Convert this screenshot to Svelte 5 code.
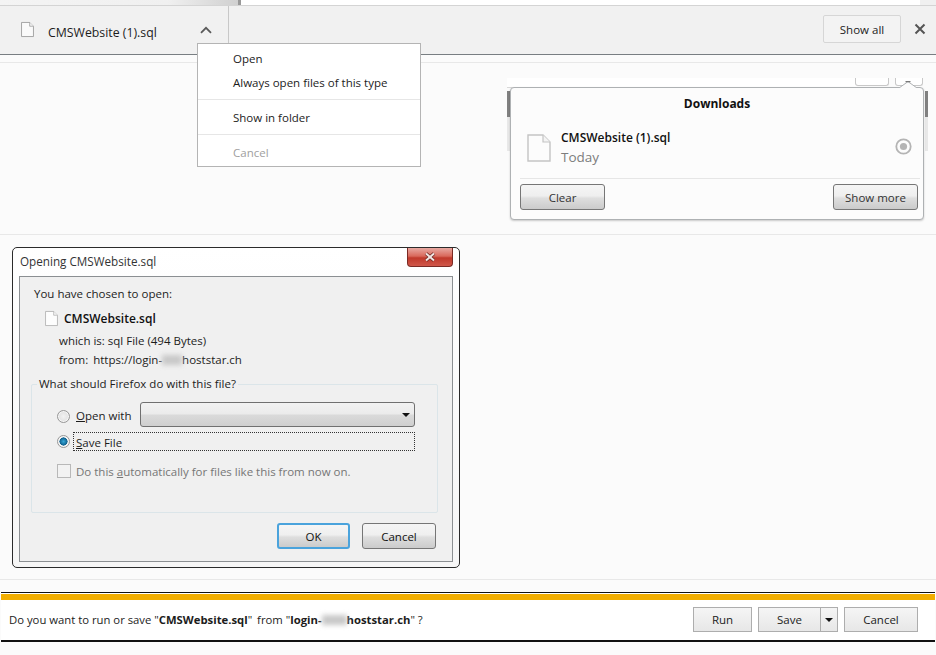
<script>
  const menu = [
    { label: 'Open' },
    { label: 'Always open files of this type', divider: true },
    { label: 'Show in folder', divider: true },
    { label: 'Cancel', disabled: true }
  ];
</script>

{#snippet doc(w, h, stroke, fill)}
  <svg width={w} height={h} viewBox="0 0 24 28" class="doc">
    <path d="M1 1H16L23 8V27H1Z" fill={fill} stroke={stroke} stroke-width="1.4" />
    <path d="M16 1V8H23" fill="#f4f4f4" stroke={stroke} stroke-width="1.2" />
  </svg>
{/snippet}

<div class="page">
  <div class="strip"><span class="strip-fade"></span><span class="strip-tick"></span><span class="strip-end"></span></div>

  <div class="bar">
    <div class="item">
      {@render doc(13, 17, '#8d8d8d', '#fafafa')}
      <span class="item-name">CMSWebsite (1).sql</span>
      <svg class="chevron" width="12" height="8" viewBox="0 0 12 8">
        <path d="M1 6.8L6 1.8L11 6.8" fill="none" stroke="#5a5a5a" stroke-width="1.8" />
      </svg>
    </div>
    <button class="show-all">Show all</button>
    <svg class="close" width="12" height="12" viewBox="0 0 12 12">
      <path d="M1.5 1.5L10.5 10.5M10.5 1.5L1.5 10.5" stroke="#555" stroke-width="2" />
    </svg>
  </div>

  <div class="menu">
    {#each menu as m}
      <div class="menu-row" class:disabled={m.disabled} class:divided={m.divider}>{m.label}</div>
    {/each}
  </div>

  <section class="band top">
    <div class="popup-wrap">
      <div class="behind"></div>
      <div class="behind-btn one"></div>
      <div class="behind-btn two"></div>
      <div class="side left"></div>
      <div class="side right"></div>
      <div class="popup">
        <svg class="caret" width="18" height="7" viewBox="0 0 18 7">
          <path d="M0 7L9 0.6L18 7" fill="#fcfcfc" stroke="#aeb1b3" stroke-width="1" />
          <path d="M6.5 0H11.5V1.2H6.5Z" fill="#777" />
        </svg>
        <div class="popup-title">Downloads</div>
        <div class="popup-row">
          {@render doc(24, 28, '#c4c4c4', '#fcfcfc')}
          <div class="popup-info">
            <div class="popup-name">CMSWebsite (1).sql</div>
            <div class="popup-date">Today</div>
          </div>
          <svg class="target" width="17" height="17" viewBox="0 0 17 17">
            <circle cx="8.5" cy="8.5" r="7.2" fill="none" stroke="#b4b4b4" stroke-width="1.8" />
            <circle cx="8.5" cy="8.5" r="3.6" fill="#b4b4b4" />
          </svg>
        </div>
        <div class="popup-actions">
          <button class="aero clear">Clear</button>
          <button class="aero more">Show more</button>
        </div>
      </div>
    </div>
  </section>

  <section class="band middle">
    <div class="dialog">
      <div class="titlebar">
        <span>Opening CMSWebsite.sql</span>
        <div class="win-close">
          <svg width="14" height="10" viewBox="0 0 14 10">
            <path d="M3 1.5L11 8.5M11 1.5L3 8.5" stroke="#6d2a24" stroke-width="3.6" />
            <path d="M3 1.5L11 8.5M11 1.5L3 8.5" stroke="#f2e6e4" stroke-width="2" />
          </svg>
        </div>
      </div>
      <div class="panel">
        <div class="chosen">You have chosen to open:</div>
        <div class="file-line">
          {@render doc(13, 17, '#a8a8a8', '#fdfdfd')}
          <strong>CMSWebsite.sql</strong>
        </div>
        <div class="meta">which is: sql File (494 Bytes)</div>
        <div class="meta from">from:<span class="url">https://login-<i class="smudge wide"></i>hoststar.ch</span></div>

        <div class="group">
          <div class="legend">What should Firefox do with this file?</div>
          <div class="option">
            <span class="radio low"></span>
            <span class="opt-label"><u>O</u>pen with</span>
            <div class="select"><span class="select-arrow"></span></div>
          </div>
          <div class="option save">
            <span class="radio on"></span>
            <span class="opt-focus"><u>S</u>ave File</span>
          </div>
          <div class="option auto">
            <span class="check"></span>
            <span>Do this <u>a</u>utomatically for files like this from now on.</span>
          </div>
        </div>

        <div class="dialog-actions">
          <button class="aero ok">OK</button>
          <button class="aero cancel">Cancel</button>
        </div>
      </div>
    </div>
  </section>

  <div class="notify">
    <p>Do you want to run or save "<b>CMSWebsite.sql</b>" <span class="from-word">from</span> "<b>login-<i class="smudge"></i>hoststar.ch</b>" ?</p>
    <div class="notify-actions">
      <button class="flat run">Run</button>
      <div class="split">
        <button class="flat save-btn">Save</button>
        <button class="flat drop" aria-label="More"><span class="drop-arrow"></span></button>
      </div>
      <button class="flat cancel-btn">Cancel</button>
    </div>
  </div>
</div>

<style>
  :global(body) {
    margin: 0;
    background: #fbfbfb;
  }

  .page {
    position: relative;
    width: 936px;
    height: 655px;
    overflow: hidden;
    font-family: "Open Sans", "Noto Sans", sans-serif;
    font-size: 11.5px;
    color: #1c1c1c;
  }

  button {
    font: inherit;
    color: inherit;
    padding: 0;
  }

  .doc {
    display: block;
    flex: none;
  }

  .strip {
    position: relative;
    height: 5px;
    background: #fff;
    border-bottom: 1px solid #d4d4d4;
  }

  .strip-fade {
    position: absolute;
    left: 0;
    top: 0;
    width: 240px;
    height: 5px;
    background: linear-gradient(90deg, #f4f4f4 0%, #f0f0f0 70%, #cfcfcf 100%);
  }

  .strip-tick {
    position: absolute;
    left: 238px;
    top: 0;
    width: 3px;
    height: 5px;
    background: #999;
  }

  .strip-end {
    position: absolute;
    right: 0;
    top: 0;
    width: 16px;
    height: 5px;
    background: #f0f0f0;
  }

  .bar {
    height: 48px;
    background: #f1f1f1;
    border-bottom: 1px solid #787e82;
    display: flex;
    align-items: flex-start;
  }

  .item {
    width: 229px;
    height: 48px;
    box-sizing: border-box;
    border-right: 1px solid #c8c8c8;
    margin-right: 594px;
    padding: 15px 0 0 21px;
    display: flex;
    align-items: flex-start;
  }

  .item-name {
    margin-left: 14px;
    margin-top: 3px;
    width: 152px;
    font-size: 12.3px;
  }

  .chevron {
    margin-top: 5px;
  }

  .show-all {
    width: 78px;
    height: 28px;
    margin-top: 9px;
    background: #f3f3f3;
    border: 1px solid #d6d6d6;
    border-radius: 2px;
  }

  .close {
    margin: 17px 0 0 13px;
  }

  .menu {
    position: absolute;
    left: 197px;
    top: 43px;
    width: 224px;
    box-sizing: border-box;
    height: 124px;
    background: #fff;
    border: 1px solid #b4b4b4;
    padding-top: 3px;
    z-index: 5;
  }

  .menu-row {
    height: 24px;
    line-height: 24px;
    padding-left: 35px;
  }

  .menu-row.divided {
    height: 29px;
    line-height: 24px;
    border-bottom: 1px solid #e6e6e6;
    box-sizing: border-box;
  }

  .menu-row.divided:nth-child(3) {
    height: 35px;
    padding-top: 6px;
  }

  .menu-row.disabled {
    margin-top: 6px;
    color: #a0a0a0;
  }

  .band {
    border-top: 1px solid #e8e8e8;
    border-bottom: 1px solid #e8e8e8;
    box-sizing: border-box;
  }

  .band.top {
    margin-top: 7px;
    height: 173px;
    display: flex;
    justify-content: flex-end;
    padding: 24px 12px 0 0;
  }

  .popup-wrap {
    position: relative;
    width: 414px;
  }

  .behind {
    position: absolute;
    left: -3px;
    top: -9px;
    width: 350px;
    height: 9px;
    background: #fff;
    border-bottom: 1px solid #d8d8d8;
  }

  .behind-btn {
    position: absolute;
    top: -9px;
    height: 7px;
    border: 1px solid #c8c8c8;
    border-top: 0;
    border-radius: 0 0 3px 3px;
    background: #fff;
  }

  .behind-btn.one {
    left: 345px;
    width: 32px;
  }

  .behind-btn.two {
    left: 385px;
    width: 26px;
  }

  .side {
    position: absolute;
    top: 4px;
    width: 3px;
    height: 60px;
    background: linear-gradient(#808080 26px, #e8e8e8 26px);
  }

  .side.left {
    left: -3px;
  }

  .side.right {
    right: -4px;
  }

  .popup {
    position: relative;
    height: 133px;
    box-sizing: border-box;
    background: #fcfcfc;
    border: 1px solid #aeb1b3;
    border-radius: 4px;
    box-shadow: 0 1px 2px rgba(0, 0, 0, 0.2);
  }

  .caret {
    position: absolute;
    right: 6px;
    top: -7px;
    display: block;
  }

  .popup-title {
    text-align: center;
    font-weight: 700;
    font-size: 12px;
    color: #111;
    padding-top: 7px;
    height: 37px;
    box-sizing: border-box;
  }

  .popup-row {
    display: flex;
    align-items: flex-start;
    padding: 9px 0 0 7px;
    height: 54px;
    box-sizing: border-box;
    margin: 0 3px 0 9px;
    border-bottom: 1px solid #e6e6e6;
    position: relative;
  }

  .popup-info {
    margin-left: 10px;
    margin-top: -5px;
  }

  .popup-name {
    font-weight: 600;
    font-size: 12px;
    color: #111;
    line-height: 18px;
  }

  .popup-date {
    font-size: 13.5px;
    color: #7d7d7d;
    line-height: 20px;
  }

  .target {
    position: absolute;
    right: 8px;
    top: 13px;
  }

  .popup-actions {
    display: flex;
    justify-content: space-between;
    padding: 5px 5px 0 9px;
  }

  .aero {
    box-sizing: border-box;
    border: 1px solid #767676;
    border-radius: 3px;
    background: linear-gradient(#f5f5f5 0%, #efefef 45%, #dedede 55%, #cbcbcb 100%);
    color: #333;
  }

  .clear,
  .more {
    width: 85px;
    height: 26px;
  }

  .band.middle {
    margin-top: 0;
    height: 345px;
    border-top: 0;
    padding: 12px 0 0 12px;
  }

  .dialog {
    width: 448px;
    height: 321px;
    box-sizing: border-box;
    border: 1px solid #2b2b2b;
    border-radius: 5px;
    background: linear-gradient(#fff 0%, #f6f6f6 100%);
    padding: 0 6px 5px;
    display: flex;
    flex-direction: column;
  }

  .titlebar {
    height: 28px;
    display: flex;
    justify-content: space-between;
    font-size: 11.7px;
    color: #333;
    padding: 5px 0 0 1px;
    box-sizing: border-box;
  }

  .win-close {
    width: 46px;
    height: 19px;
    margin-top: -5px;
    box-sizing: border-box;
    border: 1px solid #7a2a24;
    border-top: 0;
    border-radius: 0 0 4px 4px;
    background: linear-gradient(#e8a9a2 0%, #d9695c 45%, #c0392b 55%, #d0574a 100%);
    display: flex;
    align-items: center;
    justify-content: center;
  }

  .panel {
    flex: 1;
    background: #f0f0f0;
    border: 1px solid #8b8f92;
    padding: 0 14px;
    position: relative;
  }

  .chosen {
    margin-top: 8px;
    line-height: 17px;
  }

  .file-line {
    display: flex;
    align-items: center;
    gap: 6px;
    margin: 7px 0 0 11px;
    height: 18px;
    font-size: 12px;
  }

  .file-line strong {
    font-weight: 600;
    color: #111;
  }

  .meta {
    margin-left: 25px;
    margin-top: 6px;
    line-height: 16px;
  }

  .meta.from {
    margin-top: 3px;
    display: flex;
  }

  .url {
    margin-left: 5px;
  }

  .smudge {
    display: inline-block;
    width: 25px;
    height: 10px;
    background: #c8c8c8;
    filter: blur(2.5px);
    vertical-align: -1px;
  }

  .smudge.wide {
    width: 20px;
  }

  .group {
    position: relative;
    margin: 16px 0 0 -3px;
    width: 407px;
    height: 129px;
    box-sizing: border-box;
    border: 1px solid #dbe5e9;
    border-radius: 2px;
    padding: 17px 0 0 25px;
  }

  .legend {
    position: absolute;
    left: 5px;
    top: -9px;
    padding: 0 2px;
    background: #f0f0f0;
    line-height: 16px;
  }

  .option {
    display: flex;
    align-items: center;
    height: 25px;
  }

  .option.save {
    margin-top: 5px;
    height: 19px;
  }

  .option.auto {
    margin-top: 13px;
    height: 14px;
    color: #767676;
  }

  .radio {
    width: 11px;
    height: 11px;
    border: 1px solid #979797;
    border-radius: 50%;
    background: radial-gradient(#f2f2f2, #d8d8d8);
    margin-right: 5px;
    flex: none;
    box-shadow: inset 0 0 0 1px #f6f6f6;
  }

  .radio.low {
    margin-top: 3px;
  }

  .radio.on {
    background: radial-gradient(circle, #36a8d8 0%, #0e5f8c 50%, #f2f2f2 55%);
  }

  .opt-label {
    margin-left: 1px;
    width: 64px;
    padding-top: 2px;
  }

  .select {
    position: relative;
    width: 275px;
    height: 25px;
    box-sizing: border-box;
    border: 1px solid #707070;
    border-radius: 3px;
    background: linear-gradient(#f2f2f2 0%, #ebebeb 48%, #dadada 52%, #cfcfcf 100%);
  }

  .select-arrow,
  .drop-arrow {
    position: absolute;
    border-left: 4px solid transparent;
    border-right: 4px solid transparent;
    border-top: 4px solid #111;
  }

  .select-arrow {
    right: 4px;
    top: 10px;
  }

  .opt-focus {
    margin-left: -2px;
    width: 342px;
    height: 19px;
    line-height: 19px;
    box-sizing: border-box;
    border: 1px dotted #333;
    padding-left: 2px;
  }

  .check {
    width: 12px;
    height: 12px;
    border: 1px solid #b8b8b8;
    background: #f2f2f2;
    margin-right: 5px;
    flex: none;
  }

  .dialog-actions {
    display: flex;
    justify-content: flex-end;
    gap: 12px;
    margin: 10px 2px 0 0;
  }

  .dialog-actions .aero {
    width: 74px;
    height: 26px;
    color: #111;
  }

  .dialog-actions .aero.ok {
    width: 73px;
    border: 2px solid #4aa3dc;
  }

  .notify {
    margin: 12px 1px 0;
    height: 50px;
    box-sizing: border-box;
    background: #fff;
    border-top: 1px solid #111;
    border-bottom: 2px solid #111;
    box-shadow: inset 0 1px 0 #fff, inset 0 7px 0 #f2ae00;
    padding-top: 14px;
    display: flex;
    justify-content: space-between;
    align-items: flex-start;
  }

  .notify p {
    margin: 5px 0 0 8px;
    font-size: 11.3px;
  }

  .notify b {
    font-weight: 700;
  }

  .from-word {
    margin-left: 2px;
  }

  .notify-actions {
    display: flex;
    gap: 6px;
    margin-right: 17px;
  }

  .split {
    display: flex;
  }

  .flat {
    position: relative;
    height: 25px;
    box-sizing: border-box;
    border: 1px solid #adadad;
    background: linear-gradient(#f5f5f5, #e7e7e7);
  }

  .run {
    width: 59px;
  }

  .save-btn {
    width: 62px;
    border-right: 0;
  }

  .drop {
    width: 18px;
  }

  .drop-arrow {
    left: 4px;
    top: 10px;
  }

  .cancel-btn {
    width: 74px;
  }
</style>
